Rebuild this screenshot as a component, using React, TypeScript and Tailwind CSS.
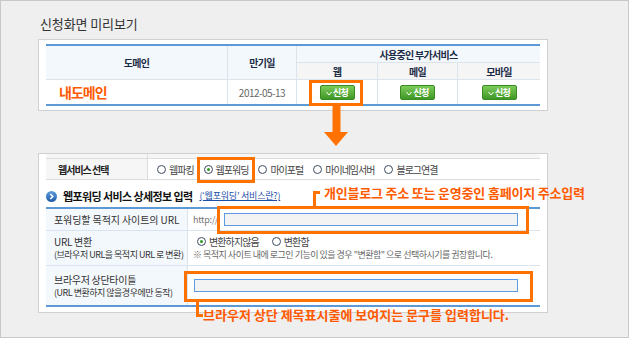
import React from 'react';

const Radio = ({ checked, label }: { checked?: boolean; label: string }) => (
  <span className="flex items-center gap-[3px]">
    <span className="flex h-[9px] w-[9px] items-center justify-center rounded-full border border-[#3d4b60] bg-white">
      {checked && <span className="h-[3px] w-[3px] rounded-full bg-[#2f9a1e]" />}
    </span>
    <span>{label}</span>
  </span>
);

const ApplyButton = () => (
  <span className="inline-flex h-[15px] w-[35px] items-center justify-center gap-[1px] rounded-[2px] border border-[#3a8a23] bg-linear-to-b from-[#7ccb58] to-[#3e9825] text-[9px] font-bold leading-none text-white">
    <svg width="6" height="5" viewBox="0 0 6 5" className="mt-[2px]">
      <path d="M0.5 1 L3 4 L5.5 1" fill="none" stroke="#fff" strokeWidth="1" />
    </svg>
    신청
  </span>
);

export default function App() {
  return (
    <div className="relative h-[338px] w-[629px] overflow-hidden border border-[#c8c8c8] bg-[#efefef] font-['Noto_Sans_CJK_KR',sans-serif] text-[#333]">
      <h1 className="h-[38px] pl-[39px] pt-[14px] text-[13px] font-normal leading-[18px] tracking-[-0.1px] text-[#333]">
        신청화면 미리보기
      </h1>

      {/* 미리보기 상단: 도메인 목록 */}
      <div className="ml-[37px] h-[72px] w-[510px] border border-[#d0d0d0] bg-white pl-[7px] pt-[4px]">
        <div className="w-[494px] border-y-2 border-[#5d99d4]">
          <div className="grid grid-cols-[181px_68px_80px_79px_82px] grid-rows-[16px_16px_24px] gap-px bg-[#dbe4ec] text-[10px] tracking-[-0.7px] text-[#1c2b45]">
            <div className="row-span-2 flex items-center justify-center bg-[#f3f8fc] font-bold">도메인</div>
            <div className="row-span-2 flex items-center justify-center bg-[#f3f8fc] font-bold">만기일</div>
            <div className="col-span-3 flex items-center justify-center bg-[#f3f8fc] font-bold">사용중인 부가서비스</div>
            <div className="flex items-center justify-center bg-[#f5f5f5] font-bold">웹</div>
            <div className="flex items-center justify-center bg-[#f5f5f5] font-bold">메일</div>
            <div className="flex items-center justify-center bg-[#f5f5f5] font-bold">모바일</div>
            <div className="flex items-center bg-white pl-[13px] text-[14px] font-bold tracking-[-1px] text-[#ff5a00]">내도메인</div>
            <div className="flex items-center justify-center bg-white tracking-[-0.5px] text-[#666]">2012-05-13</div>
            <div className="flex items-center justify-center bg-white"><ApplyButton /></div>
            <div className="flex items-center justify-center bg-white"><ApplyButton /></div>
            <div className="flex items-center justify-center bg-white"><ApplyButton /></div>
          </div>
        </div>
      </div>

      {/* 신청 화면 */}
      <div className="ml-[37px] mt-[42px] h-[160px] w-[510px] border border-[#d0d0d0] bg-white px-[7px]">
        <div className="grid w-[494px] grid-cols-[101px_392px] grid-rows-[4px_20px] gap-px border-b border-[#dcdcdc] bg-[#dcdcdc] text-[10px] tracking-[-1px]">
          <div className="bg-[#f6f6f6]" />
          <div className="bg-[#f6f6f6]" />
          <div className="flex items-center bg-[#f6f6f6] pl-[12px] font-bold text-[#222]">웹서비스 선택</div>
          <div className="flex items-center gap-[10px] bg-white pl-[9px] text-[#444]">
            <Radio label="웹파킹" />
            <Radio checked label="웹포워딩" />
            <Radio label="마이포털" />
            <Radio label="마이네임서버" />
            <Radio label="블로그연결" />
          </div>
        </div>

        <div className="flex h-[27px] items-center gap-[6px] pt-[5px]">
          <svg width="11" height="11" viewBox="0 0 11 11">
            <defs>
              <linearGradient id="ic" x1="0" y1="0" x2="0" y2="1">
                <stop offset="0" stopColor="#5f9ee0" />
                <stop offset="1" stopColor="#1f5ba3" />
              </linearGradient>
            </defs>
            <circle cx="5.5" cy="5.5" r="5.5" fill="url(#ic)" />
            <path d="M4.3 3 L6.8 5.5 L4.3 8" fill="none" stroke="#fff" strokeWidth="1.6" />
          </svg>
          <span className="text-[11px] font-bold tracking-[-0.6px] text-[#111]">웹포워딩 서비스 상세정보 입력</span>
          <span className="ml-[1px] text-[9px] tracking-[-0.2px] text-[#1d4fa8] underline">(‘웹포워딩’ 서비스란?)</span>
        </div>

        <div className="w-[494px] border-y-2 border-[#5d99d4]">
          <div className="grid grid-cols-[141px_352px] grid-rows-[21px_34px_39px] gap-px bg-[#d9e4ee] text-[#333]">
            <div className="flex items-center bg-[#f3f8fc] pl-[8px] text-[10px] tracking-[-0.1px]">포워딩할 목적지 사이트의 URL</div>
            <div className="flex items-center bg-white pl-[5px]">
              <span className="w-[31px] text-[9px] tracking-[-0.3px] text-[#777]">http://</span>
              <span className="h-[13px] w-[294px] border border-[#5f9be2] bg-[#f3f3f3]" />
            </div>

            <div className="flex flex-col justify-center bg-[#f3f8fc] pl-[8px]">
              <span className="text-[10px] leading-[13px] tracking-[-0.3px]">URL 변환</span>
              <span className="text-[9px] leading-[13px] tracking-[-0.5px]">(브라우저 URL을 목적지 URL 로 변환)</span>
            </div>
            <div className="flex flex-col justify-center bg-white pl-[9px]">
              <div className="flex items-center gap-[13px] text-[10px] leading-[13px] tracking-[-0.9px] text-[#444]">
                <Radio checked label="변환하지않음" />
                <Radio label="변환함" />
              </div>
              <span className="-ml-[4px] text-[9px] leading-[13px] tracking-[-0.5px] text-[#666]">
                ※ 목적지 사이트 내에 로그인 기능이 있을 경우 "변환함" 으로 선택하시기를 권장합니다.
              </span>
            </div>

            <div className="flex flex-col justify-center bg-[#f3f8fc] pl-[8px]">
              <span className="text-[10px] leading-[13px] tracking-[-0.3px]">브라우저 상단타이틀</span>
              <span className="text-[9px] leading-[13px] tracking-[-0.5px]">(URL 변환하지 않을경우에만 동작)</span>
            </div>
            <div className="flex items-center bg-white pl-[6px]">
              <span className="h-[13px] w-[324px] border border-[#5f9be2] bg-[#f3f3f3]" />
            </div>
          </div>
        </div>
      </div>

      {/* 안내 표시 */}
      <div className="absolute left-[308px] top-[79px] h-[26px] w-[54px] border-[3px] border-[#ff7200]" />
      <svg className="absolute left-[322px] top-[104px]" width="26" height="41" viewBox="0 0 26 41">
        <rect x="9.5" y="0" width="8" height="27" fill="#ff7200" />
        <polygon points="1,27 25,27 13,41" fill="#ff7200" />
      </svg>
      <div className="absolute left-[196px] top-[156px] h-[26px] w-[58px] border-[3px] border-[#ff7200]" />
      <div className="absolute left-[216px] top-[205px] h-[28px] w-[312px] border-[3px] border-[#ff7200]" />
      <div className="absolute left-[183px] top-[270px] h-[31px] w-[349px] border-[3px] border-[#ff7200]" />

      <div className="absolute left-[312px] top-[190px] h-[16px] w-[3px] bg-[#ff7200]" />
      <div className="absolute left-[312px] top-[190px] h-[3px] w-[7px] bg-[#ff7200]" />
      <div className="absolute left-[323px] top-[184px] text-[13px] font-bold leading-[16px] tracking-[-0.2px] text-[#ff5a00]">
        개인블로그 주소 또는 운영중인 홈페이지 주소입력
      </div>

      <div className="absolute left-[195px] top-[299px] h-[17px] w-[3px] bg-[#ff7200]" />
      <div className="absolute left-[195px] top-[313px] h-[3px] w-[7px] bg-[#ff7200]" />
      <div className="absolute left-[202px] top-[306px] text-[13px] font-bold leading-[16px] tracking-[0px] text-[#ff5a00]">
        브라우저 상단 제목표시줄에 보여지는 문구를 입력합니다.
      </div>
    </div>
  );
}
